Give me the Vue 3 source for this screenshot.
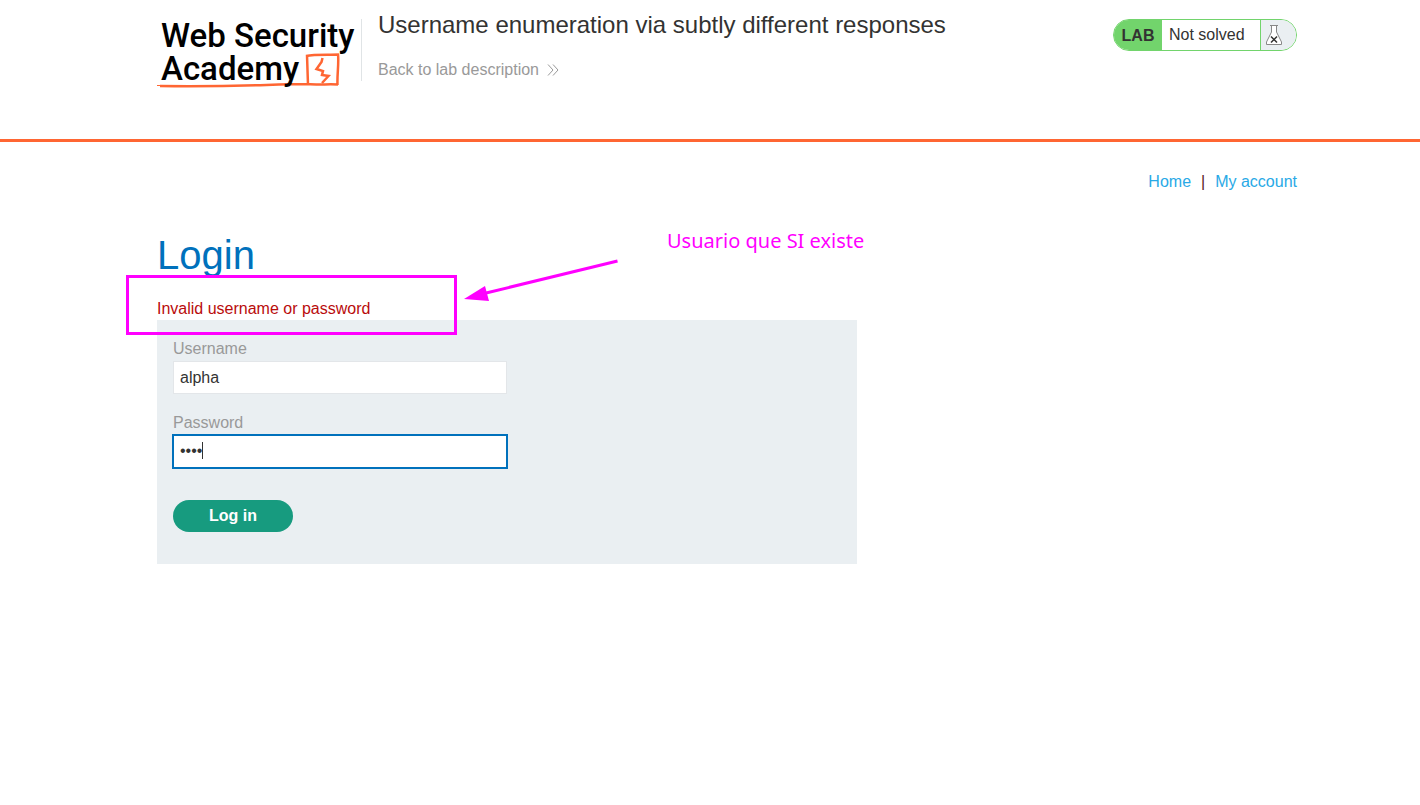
<script setup>
import { ref } from 'vue'

const username = ref('alpha')
const password = ref('beta')
</script>

<template>
  <div class="page">
    <header class="lab-header">
      <div class="container header-row">
        <a class="logo" href="#" aria-label="Web Security Academy">
          <svg viewBox="0 0 204 76" width="204" height="76">
            <path d="M150 39 L151 69 M149 40 C158 38 170 39 182 38.500 M181 38 C182 48 180 58 180.500 69 M181 68.500 C171 68 160 69 151 68 C110 68 90 71 3 70" />
            <path class="tail" d="M0 69.500 H8" />
            <path d="M165.500 42 L164.500 46 L159.500 53 L166 55 L165 59 L171.500 60 L165 67" />
            <text class="logo-text" x="4" y="31">Web Security</text>
            <text class="logo-text" x="4" y="64">Academy</text>
          </svg>
        </a>
        <span class="divider"></span>
        <div class="title-block">
          <h2>Username enumeration via subtly different responses</h2>
          <a class="back" href="#">
            Back to lab description
            <svg viewBox="0 0 12 12" width="12" height="12"><path d="M1 0.500 L6 6 L1 11.500 M6 0.500 L11 6 L6 11.500" /></svg>
          </a>
        </div>
        <div class="status">
          <strong>LAB</strong>
          <span class="state">Not solved</span>
          <span class="flask">
            <svg viewBox="0 0 16 20" width="16" height="20">
              <path class="glass" d="M5.500 0.500 V7 L0.500 17 V19.500 H15.500 V17 L10.500 7 V0.500" />
              <path class="rim" d="M4 0.500 H12" />
              <path class="cross" d="M5 11.500 L11 17.500 M11 11.500 L5 17.500" />
            </svg>
          </span>
        </div>
      </div>
    </header>

    <main class="container">
      <nav>
        <a href="#">Home</a><span>|</span><a href="#">My account</a>
      </nav>

      <section class="login">
        <h1>Login</h1>
        <p class="warning">Invalid username or password</p>
        <form @submit.prevent>
          <label for="username">Username</label>
          <input id="username" v-model="username" type="text" />
          <label for="password">Password</label>
          <div class="password-field">
            <input id="password" v-model="password" class="active" type="password" />
            <span class="caret"></span>
          </div>
          <button type="submit">Log in</button>
        </form>

        <div class="highlight"></div>
        <svg class="arrow" viewBox="0 0 156 44" width="156" height="44">
          <path class="shaft" d="M20 34.500 L153.500 2" />
          <path class="head" d="M0 40 L21 27 L25 42 Z" />
        </svg>
        <p class="note">Usuario que SI existe</p>
      </section>
    </main>
  </div>
</template>

<style>
body {
  margin: 0;
  background: #fff;
}
</style>

<style scoped>
.page {
  font-family: "Liberation Sans", Arial, sans-serif;
  font-size: 16px;
  line-height: 20px;
  color: #333332;
}

a {
  text-decoration: none;
}

.lab-header {
  border-bottom: 3px solid #ff6633;
  padding-left: 34px;
}

main {
  padding-left: 34px;
}

.container {
  max-width: 1140px;
  margin: 0 auto;
}

.header-row {
  display: flex;
  align-items: flex-start;
  min-height: 139px;
}

.logo {
  height: 76px;
  margin-top: 16px;
}

.logo svg {
  display: block;
}

.logo-text {
  font-family: Roboto, "Liberation Sans", sans-serif;
  font-size: 33px;
  font-weight: 500;
  fill: #000;
}

.logo path {
  fill: none;
  stroke: #ff6633;
  stroke-width: 2.5;
}

.logo .tail {
  stroke-width: 1;
}

.divider {
  width: 1px;
  height: 62px;
  margin-top: 19px;
  background: #e0e4e6;
}

.title-block {
  flex: 1;
  padding: 10px 16px 0;
}

h2 {
  margin: 0 0 20px;
  font-size: 24px;
  font-weight: 400;
  line-height: 30px;
}

.back {
  display: flex;
  align-items: center;
  gap: 8px;
  color: #999;
}

.back path {
  fill: none;
  stroke: #999;
}

.status {
  display: flex;
  box-sizing: border-box;
  width: 184px;
  height: 32px;
  margin-top: 19px;
  overflow: hidden;
  border: 1px solid #72d46c;
  border-radius: 16px;
  line-height: 30px;
}

.status strong {
  width: 48px;
  background: #72d46c;
  text-align: center;
  line-height: 32px;
}

.state {
  flex: 1;
  padding-left: 7px;
}

.flask {
  display: flex;
  align-items: center;
  width: 30px;
  padding-left: 5px;
  border-left: 1px solid #72d46c;
  background: #eaeff2;
}

.glass {
  fill: #fff;
  stroke: #888;
}

.rim {
  stroke: #888;
}

.cross {
  stroke: #333332;
  stroke-width: 1.5;
}

main.container {
  box-sizing: border-box;
  max-width: 1174px;
  padding-top: 30px;
}

nav {
  display: flex;
  justify-content: flex-end;
  gap: 10px;
}

nav a {
  color: #29a9e6;
}

nav span {
  color: #5a1a1a;
}

.login {
  position: relative;
}

h1 {
  margin: 0;
  padding-top: 39px;
  color: #0071bc;
  font-size: 40px;
  font-weight: 400;
  line-height: 48px;
}

.warning {
  margin: 0;
  padding: 20px 0 1px;
  color: #b90b0b;
}

form {
  box-sizing: border-box;
  max-width: 700px;
  padding: 19px 16px 32px;
  background: #eaeff2;
}

label {
  display: block;
  margin-bottom: 2px;
  color: #999;
}

input {
  display: block;
  box-sizing: border-box;
  width: 334px;
  height: 33px;
  margin: 0 0 19px;
  padding: 0 6px;
  border: 1px solid #e3e6e9;
  border-radius: 0;
  outline: 0;
  background: #fff;
  color: #333332;
  font: inherit;
}

.password-field {
  position: relative;
}

input.active {
  margin-bottom: 32px;
  padding-bottom: 2px;
  border-color: #0071bc;
  box-shadow: 0 0 0 1px #0071bc;
}

.caret {
  position: absolute;
  top: 7px;
  left: 29px;
  width: 1px;
  height: 17px;
  background: #333332;
}

button {
  width: 120px;
  height: 32px;
  padding: 0;
  border: 0;
  border-radius: 16px;
  background: #179b7f;
  color: #fff;
  font: inherit;
  font-weight: 700;
}

.highlight {
  position: absolute;
  top: 83px;
  left: -31px;
  box-sizing: border-box;
  width: 331px;
  height: 60px;
  border: 3px solid #ff00ff;
}

.arrow {
  position: absolute;
  top: 67px;
  left: 307px;
}

.shaft {
  stroke: #ff00ff;
  stroke-width: 3;
}

.head {
  fill: #ff00ff;
}

.note {
  position: absolute;
  top: 37px;
  left: 510px;
  margin: 0;
  color: #ff00ff;
  font-family: "Noto Sans", sans-serif;
  font-size: 20px;
  line-height: 24px;
}
</style>
